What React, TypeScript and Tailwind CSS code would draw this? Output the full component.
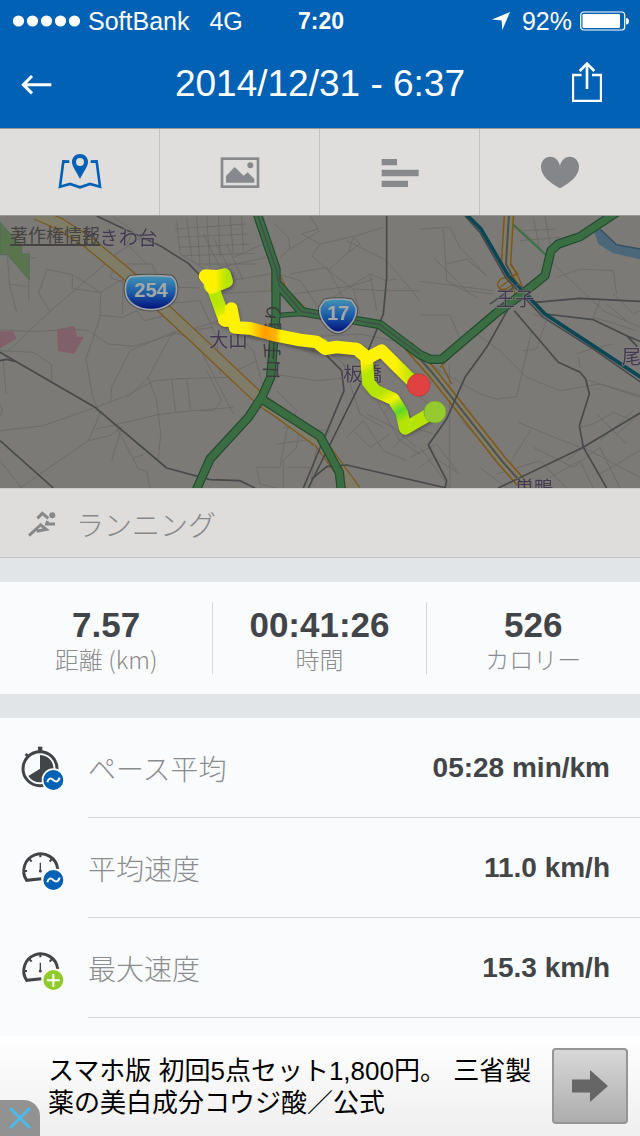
import type { ReactNode } from 'react';

const STREETS = [
  'M0 347L100 353L215 345L265 350L325 390L400 397L660 320',
  'M20 415L150 292L360 112L440 60',
  'M150 292L116 238L140 166L217 182L302 235L300 310L258 435L278 548L300 600L265 680L60 822',
  'M217 182L217 224L302 235L360 200L420 180',
  'M300 304L368 310L410 290L432 320L520 300',
  'M332 565L335 520L390 410L518 355L640 340',
  'M0 650L125 636L265 588L380 545L462 500L540 494L700 490',
  'M380 553L445 490L470 560L482 660L475 735',
  'M515 497L527 596M560 494L572 590M475 602L527 595L700 580',
  'M445 490L518 355L585 375L700 600',
  'M290 645L475 602M265 680L330 665L365 640L335 740',
  'M300 590L350 640L415 765L440 770L450 822M400 732L430 722',
  'M0 410L100 415L155 452L155 500M10 440L18 540',
  'M20 90L28 210L50 295M28 210L80 218M86 110L86 262M60 130L110 132',
  'M0 740L65 822M0 570L8 590L0 605',
  'M330 190L350 150L455 150L470 180L450 230M368 200L368 300M330 190L400 215L600 222',
  'M305 160L350 115M340 10L400 50L380 90L440 150',
  'M530 20L540 120L640 180M560 12L575 130M590 8L600 150M620 6L630 160M655 6L660 130M690 6L700 120M725 6L730 110',
  'M525 45L740 30M530 70L745 60M535 100L750 90M550 125L765 118M590 150L770 150',
  'M610 60L680 200M640 70L710 210M680 90L730 200M700 130L790 90M660 160L800 130M690 200L810 180M640 240L820 230',
  'M480 270L600 260L650 370L660 480M620 470L665 560L640 590L600 590',
  'M700 350L760 410L790 520M690 480L770 440M640 330L800 340',
  'M825 30L865 70L870 105L840 130M870 105L960 50M930 6L955 45L905 60L960 90L935 125L985 170',
  'M985 170L1000 155L1045 115L1060 70L1080 90L1045 115M960 90L1070 65L1150 40',
  'M985 170L1060 225L1160 230L1260 230M1000 250L1110 180L1160 200L1190 195',
  'M835 180L900 200L960 285M870 180L980 160L1030 250M880 240L1060 215L1120 195',
  'M1060 225L1080 300M1110 180L1130 290M1040 80L1160 140L1260 260',
  'M900 370L1080 360L1180 380M970 400L1030 450L1100 510M1030 450L1080 600L1150 640',
  'M820 480L950 500L1060 490M830 530L890 590L860 650L840 760L770 760L780 810L830 822',
  'M850 640L990 650L950 700L930 822M830 690L980 670M860 760L930 760M900 630L890 700L850 740L850 822',
  'M1040 670L1090 620L1150 710L1220 740M1060 650L1110 700L1170 660M1100 600L1180 640L1250 700',
  'M1130 560L1200 680L1260 720M1180 700L1240 640L1300 660M1150 600L1190 560L1260 640',
  'M1210 390L1320 470L1260 550L1340 610M1230 730L1310 690L1370 770',
  'M1260 45L1350 40L1380 100L1460 185M1300 130L1400 230L1480 240M1260 202L1480 230',
  'M1260 303L1350 303L1380 375L1410 380M1330 45L1340 200L1430 250M1340 150L1400 135L1460 185',
  'M1540 30L1600 80L1670 160L1810 290L1920 340M1570 50L1670 45M1560 80L1680 70M1600 10L1620 110M1635 6L1650 90',
  'M1670 190L1740 165L1840 170L1850 240M1600 300L1640 315L1610 405L1570 410M1730 420L1770 405L1840 390',
  'M1320 470L1440 540L1490 555L1550 548L1595 350M1430 360L1500 410L1580 490L1680 530L1800 510L1920 550',
  'M1555 625L1650 665L1740 700M1592 648L1525 755M1348 450L1350 822M1385 620L1470 710',
  'M1740 460L1735 430M1750 495L1920 545M1800 260L1780 310L1910 350M1820 270L1880 320M1840 240L1900 300L1920 290',
  'M1740 640L1780 630L1840 595L1900 620M1790 600L1850 660L1920 600M1800 680L1900 590M1830 640L1880 690',
  'M1490 780L1620 740L1700 822M1600 700L1720 760L1800 700L1860 822M1700 740L1750 700L1920 790',
  'M1260 700L1350 822M1260 760L1300 730L1380 780M1440 760L1520 822M1650 790L1740 740L1780 822M1800 780L1920 710',
];

const RAILS = [
  'M0 415L285 580L500 762L630 797L720 800L765 822',
  'M0 440L20 436L45 442',
  'M0 680L160 822',
  'M290 6L480 95L565 148L610 195',
  'M1160 6L1160 190L1150 300L1100 420',
  'M980 425L1025 470L1032 530L910 822',
  'M1090 490L1060 550L925 822',
  'M935 795L980 758L1040 753L1340 822',
  'M1605 265L1740 253L1920 262',
  'M1530 275L1460 400L1395 490L1340 615L1285 693L1340 800L1335 822',
  'M1543 290L1675 445L1740 475L1757 495L1768 540L1738 635L1750 700L1820 822',
  'M1920 597L1750 700L1495 822',
  'M1635 300L1780 317L1880 365L1920 382M1880 365L1912 398',
  'M1395 6L1440 55L1520 195L1630 310L1780 405L1920 503',
];

const GREENS = [
  'M828 305L900 299L960 303',
  'M785 555L960 667L1018 775L1024 830',
  'M772 0L828 165L828 300L812 490L785 550L745 610L630 735L588 830',
  'M828 205L905 293L960 303L1060 318L1140 332L1260 422L1290 436L1325 436L1490 296L1560 245L1635 185L1653 110L1675 90L1740 68L1850 -5',
];

function Label({ x, y, children }: { x: number; y: number; children: ReactNode }) {
  return (
    <text x={x} y={y} fontSize="58" fill="#3d344c" stroke="#858280" strokeWidth="4" paintOrder="stroke" opacity="0.9">
      {children}
    </text>
  );
}

function RouteMap() {
  return (
    <section className="relative">
      <svg
        viewBox="0 6 1920 816"
        preserveAspectRatio="xMidYMid slice"
        className="block h-[272px] w-full bg-[#7c7a76] font-['Noto_Sans_CJK_JP',sans-serif]"
        role="img"
        aria-label="ルート"
      >
        <defs>
          <linearGradient id="shield" x1="0" y1="0" x2="0" y2="1">
            <stop offset="0" stopColor="#4293b5" />
            <stop offset="0.5" stopColor="#1c5ca8" />
            <stop offset="1" stopColor="#03107a" />
          </linearGradient>
          <linearGradient id="upper" gradientUnits="userSpaceOnUse" x1="690" y1="0" x2="1240" y2="0">
            <stop offset="0" stopColor="#fff200" />
            <stop offset="0.1" stopColor="#ffee00" />
            <stop offset="0.19" stopColor="#ff9d00" />
            <stop offset="0.25" stopColor="#ffb400" />
            <stop offset="0.28" stopColor="#fff200" />
            <stop offset="0.9" stopColor="#fff200" />
            <stop offset="1" stopColor="#b4e400" />
          </linearGradient>
          <linearGradient id="lower" gradientUnits="userSpaceOnUse" x1="1100" y1="440" x2="1215" y2="640">
            <stop offset="0" stopColor="#fff200" />
            <stop offset="0.15" stopColor="#b4e400" />
            <stop offset="0.45" stopColor="#b4e400" />
            <stop offset="0.6" stopColor="#f5f200" />
            <stop offset="0.78" stopColor="#5cd826" />
            <stop offset="0.92" stopColor="#b4e400" />
          </linearGradient>
          <linearGradient id="start" gradientUnits="userSpaceOnUse" x1="630" y1="225" x2="680" y2="320">
            <stop offset="0" stopColor="#b4e400" />
            <stop offset="0.5" stopColor="#b9e600" />
            <stop offset="1" stopColor="#fff200" />
          </linearGradient>
          <linearGradient id="loop" gradientUnits="userSpaceOnUse" x1="620" y1="0" x2="680" y2="0">
            <stop offset="0.4" stopColor="#fff200" />
            <stop offset="1" stopColor="#b4e400" />
          </linearGradient>
          <filter id="shade" x="-10%" y="-10%" width="120%" height="120%">
            <feGaussianBlur stdDeviation="4" />
          </filter>
        </defs>

        <path d="M0 25L32 60L65 90V120H88V198L22 122H0Z" fill="#59754e" stroke="#466a5b" strokeWidth="2" />
        <path d="M0 353H38L48 373L0 402Z" fill="#80606a" stroke="#8d5668" strokeWidth="2" />
        <path d="M173 347L222 337L230 370H250L222 418L175 410Z" fill="#80606a" stroke="#8d5668" strokeWidth="2" />
        <path d="M1783 55L1800 45L1850 92L1930 107V138L1840 118L1795 90Z" fill="#4a6878" />
        <path d="M1800 45L1850 92L1930 107" fill="none" stroke="#374e60" strokeWidth="4" />

        <g fill="none" stroke="#6a6968" strokeWidth="2.5">
          {STREETS.map((d) => (
            <path key={d} d={d} />
          ))}
        </g>

        <g fill="none" strokeLinejoin="round">
          <path d="M110 0L180 30L265 85L380 180L600 385L785 560L830 590L960 685L1065 830" stroke="#7f5717" strokeWidth="38" />
          <path d="M110 0L180 30L265 85L380 180L600 385L785 560L830 590L960 685L1065 830" stroke="#7f7d68" strokeWidth="31" />
          <path d="M1527 0L1518 150L1545 200L1560 240M1225 395L1300 480L1505 740L1585 830" stroke="#7f5717" strokeWidth="32" />
          <path d="M1527 0L1518 150L1545 200L1560 240M1225 395L1300 480L1505 740L1585 830" stroke="#7f7d68" strokeWidth="23" />
          <path d="M1527 0L1518 150L1545 200M1225 395L1300 480L1505 740L1585 830" stroke="#4e4f50" strokeWidth="6" />
          <path d="M1518 225C1480 235 1490 185 1520 192L1553 180L1530 150M1500 220L1540 190L1550 205L1510 230" stroke="#7f5717" strokeWidth="4" />
          <path d="M815 150V230M838 180L860 225L920 287L1000 295M1320 460L1345 435L1490 310M1325 452L1355 510" stroke="#7f5717" strokeWidth="4" />
          <path d="M1540 32L1640 125" stroke="#39713f" strokeWidth="6" />
        </g>

        <g fill="none" stroke="#47494b" strokeWidth="5" strokeLinejoin="round">
          {RAILS.map((d) => (
            <path key={d} d={d} />
          ))}
        </g>
        <path d="M1398 0L1443 45L1525 185L1635 300L1780 395L1930 495" fill="none" stroke="#0b4655" strokeWidth="11" />

        <g fill="none" strokeLinejoin="round">
          {GREENS.map((d) => (
            <path key={d} d={d} stroke="#234b30" strokeWidth={d === GREENS[0] ? 16 : 28} />
          ))}
          {GREENS.map((d) => (
            <path key={d} d={d} stroke="#3b6d43" strokeWidth={d === GREENS[0] ? 10 : 21} />
          ))}
          <path d="M772 0L828 165L838 215L905 293L1060 318L1140 332L1260 422" stroke="#41504a" strokeWidth="5" />
          <path d="M1470 270L1555 210L1600 255" stroke="#4a5355" strokeWidth="5" />
        </g>

        <Label x={240} y={92}>ときわ台</Label>
        <Label x={627} y={400}>大山</Label>
        <Label x={1030} y={500}>板橋</Label>
        <Label x={1487} y={276}>王子</Label>
        <Label x={1865} y={451}>尾久</Label>
        <Label x={1544} y={842}>巣鴨</Label>
        <text transform="translate(834 496) rotate(-88)" fontSize="57" fill="#393c3b">
          山手通り
        </text>

        <g strokeLinecap="round" strokeLinejoin="round" fill="none" strokeWidth="38">
          <g stroke="#404040" opacity="0.6" transform="translate(3 5)" filter="url(#shade)">
            <path d="M616 185L680 182L680 205L638 222L674 320L694 325L694 284L705 340L820 362L975 402L1070 405L1103 432L1145 410L1240 505" />
            <path d="M1100 440L1105 505L1125 530L1180 555L1205 595L1216 643L1290 600" />
          </g>
          <path d="M968 393L970 396" stroke="#a8df08" />
          <path d="M630 215L640 225L674 318" stroke="url(#start)" />
          <path d="M616 185L650 187L674 182L680 202L635 220" stroke="url(#loop)" />
          <path d="M616 187L632 207" stroke="#fff200" />
          <path d="M1100 436L1105 505L1125 530L1180 555L1205 595L1216 643L1290 600" stroke="url(#lower)" />
          <path
            d="M674 319L692 320L694 284L705 340L750 343L820 362L900 378L950 384L975 404L1010 399L1070 405L1103 432L1145 410L1190 455L1240 505"
            stroke="url(#upper)"
          />
        </g>
        <circle cx="1256" cy="513" r="34" fill="#df4240" stroke="#b33a37" strokeWidth="2" />
        <circle cx="1305" cy="594" r="33" fill="#96cb30" stroke="#6f9a34" strokeWidth="2" />

        <g stroke="#303132" strokeWidth="11" opacity="0.6">
          <path d="M392 188Q453 182 514 188C528 196 532 220 529 235C520 304 386 304 377 235C374 220 378 196 392 188Z" />
          <path d="M974 259Q1014 251 1054 259L1068 280C1074 318 1035 355 1014 355C993 355 954 318 960 280Z" />
        </g>
        <g fill="url(#shield)" stroke="#9da2a7" strokeWidth="5">
          <path d="M392 188Q453 182 514 188C528 196 532 220 529 235C520 304 386 304 377 235C374 220 378 196 392 188Z" />
          <path d="M974 259Q1014 251 1054 259L1068 280C1074 318 1035 355 1014 355C993 355 954 318 960 280Z" />
        </g>
        <g
          className="font-['Liberation_Sans',sans-serif] font-bold"
          fontSize="60"
          fill="#a4a6a8"
          textAnchor="middle"
        >
          <text x="453" y="249">254</text>
          <text x="1014" y="317">17</text>
        </g>
      </svg>
      <a
        href="#copyright"
        className="absolute top-2 left-[10px] border-b-2 border-[#454441] font-['Noto_Sans_CJK_JP',sans-serif] text-[18px] leading-5 text-[#454441]"
      >
        著作権情報
      </a>
    </section>
  );
}

function StatusBar() {
  return (
    <div className="grid h-10 grid-cols-[1fr_auto_1fr] items-center pt-px pr-[10px] pl-3 text-[25px] leading-10">
      <div className="flex items-center">
        <svg viewBox="0 0 69 12" className="h-3 w-[69px]" fill="#fff" aria-hidden="true">
          {[6, 20, 34, 48, 62].map((cx) => (
            <circle key={cx} cx={cx + 0.5} cy="6" r="5.6" />
          ))}
        </svg>
        <span className="ml-[7px]">SoftBank</span>
        <span className="ml-5">4G</span>
      </div>
      <span className="text-[23px] font-bold">7:20</span>
      <div className="flex items-center justify-end">
        <svg viewBox="0 0 18 18" className="h-[18px] w-[18px]" fill="#fff" aria-hidden="true">
          <path d="M18 0L10.3 18L9.6 8.6L0 7.6Z" />
        </svg>
        <span className="ml-3">92%</span>
        <svg viewBox="0 0 50 20" className="ml-2 h-5 w-[50px]" aria-hidden="true">
          <rect x="0.7" y="1" width="44" height="18" rx="3" fill="none" stroke="#fff" strokeWidth="1.2" />
          <rect x="2.5" y="3" width="37.5" height="14" rx="1" fill="#fff" />
          <path d="M46 7C50 7 50 13.5 46 13.5Z" fill="#fff" />
        </svg>
      </div>
    </div>
  );
}

const TABS = [
  {
    label: '地図',
    color: 'text-[#0061b5]',
    icon: (
      <g>
        <path d="M208 99L190 98L180 174L210 166L240 176L270 166L300 174L290 98L272 99" fill="none" stroke="currentColor" strokeWidth="8" />
        <path fillRule="evenodd" d="M240 76C226 76 216 86 216 100C216 114 230 130 240 151C250 130 264 114 264 100C264 86 254 76 240 76ZM240 88a12 12 0 1 1 0 24a12 12 0 1 1 0-24Z" fill="currentColor" />
      </g>
    ),
  },
  {
    label: '写真',
    color: 'text-[#88898c]',
    icon: (
      <g>
        <rect x="186" y="90" width="108" height="84" fill="none" stroke="currentColor" strokeWidth="8" />
        <path d="M198 162V142L224 115L251 141L263 131L283 151V162Z" fill="currentColor" />
        <circle cx="271" cy="110" r="9" fill="currentColor" />
      </g>
    ),
  },
  {
    label: 'ラップ',
    color: 'text-[#88898c]',
    icon: <path d="M185 91H231V110H185ZM185 123H296V143H185ZM185 156H264V175H185Z" fill="currentColor" />,
  },
  {
    label: '心拍数',
    color: 'text-[#858689]',
    icon: (
      <path
        d="M240 111C235 92 224 84 211 84C194 84 183 97 183 115C183 145 219 168 240 179C261 168 297 145 297 115C297 97 286 84 269 84C256 84 245 92 240 111Z"
        fill="currentColor"
      />
    ),
  },
];

const STATS = [
  { value: '7.57', label: '距離 (km)' },
  { value: '00:41:26', label: '時間' },
  { value: '526', label: 'カロリー' },
];

function Badge({ kind }: { kind: 'average' | 'max' }) {
  return (
    <g fill="none" stroke="#fff">
      <circle cx="160" cy="213" r="32.5" fill={kind === 'average' ? '#0061b5' : '#8fcb2c'} stroke="#fafbfd" strokeWidth="5" />
      {kind === 'average' ? (
        <path d="M142 220C145 207 152 206 160 213S175 219 179 206" strokeWidth="6" />
      ) : (
        <path d="M160 195V233M141 214H179" strokeWidth="6" />
      )}
    </g>
  );
}

function Stopwatch() {
  return (
    <g>
      <rect x="114" y="113" width="13" height="14" fill="#424548" />
      <path d="M74 137L80 132L88 140L81 146Z" fill="#424548" />
      <circle cx="120" cy="179" r="51" fill="none" stroke="#424548" strokeWidth="9" />
      <path d="M120 179V138A41 41 0 1 1 85 201Z" fill="#424548" />
    </g>
  );
}

function Gauge() {
  return (
    <g fill="none" stroke="#424548">
      <path d="M124 209L80 214A51 51 0 1 1 173 180" strokeWidth="9" />
      <path d="M121 133V145M87 149L95 158M157 149L149 158M69 186H81M162 186H173" strokeWidth="6" />
      <path d="M121 161V185" strokeWidth="4" />
      <circle cx="121" cy="186" r="4.5" fill="#424548" stroke="none" />
    </g>
  );
}

const DETAILS = [
  { label: 'ペース平均', value: '05:28 min/km', icon: <Stopwatch />, badge: 'average' as const },
  { label: '平均速度', value: '11.0 km/h', icon: <Gauge />, badge: 'average' as const },
  { label: '最大速度', value: '15.3 km/h', icon: <Gauge />, badge: 'max' as const },
];

export default function App() {
  return (
    <div className="flex min-h-screen flex-col bg-[#e1e5e8] font-['Liberation_Sans','Noto_Sans_CJK_JP',sans-serif]">
      <header className="bg-[#0061b5] text-white">
        <StatusBar />
        <div className="grid h-[88px] grid-cols-[80px_1fr_80px] items-center">
          <button type="button" aria-label="戻る" className="flex h-full items-center pl-5">
            <svg viewBox="60 222 96 63" className="h-[21px] w-8" fill="none" stroke="#fff" strokeWidth="9">
              <path d="M154 254H70M96 228L70 254L96 280" />
            </svg>
          </button>
          <h1 className="text-center text-[37px] leading-10">2014/12/31 - 6:37</h1>
          <button type="button" aria-label="共有" className="flex h-full items-center justify-end pr-[38px]">
            <svg viewBox="756 186 90 120" className="h-10 w-[30px] -translate-y-0.5" fill="none" stroke="#fff" strokeWidth="7">
              <path d="M785 225H759V303H843V225H816" />
              <path d="M801 267V192M779 213L801 191L823 213" strokeWidth="8" />
            </svg>
          </button>
        </div>
      </header>

      <nav className="grid h-[88px] grid-cols-4 border-t border-b border-t-[#999794] border-b-[#999794] bg-[#dfdedc]">
        {TABS.map((tab) => (
          <button
            key={tab.label}
            type="button"
            aria-label={tab.label}
            className={`flex items-center justify-center border-r border-[#c3c2c0] last:border-r-0 ${tab.color}`}
          >
            <svg viewBox="174 70 132 120" className="h-10 w-11">
              {tab.icon}
            </svg>
          </button>
        ))}
      </nav>

      <RouteMap />

      <div className="flex h-[70px] items-center gap-5 border-t border-b border-t-[#d0cfcc] border-b-[#c5c5c3] bg-[#dedddb] pt-0.5 pl-7 text-[28px] leading-10 text-[#87888a]">
        <svg viewBox="84 76 84 84" className="h-7 w-7" fill="none" stroke="#87888a" strokeWidth="9" aria-hidden="true">
          <circle cx="157" cy="92" r="9" fill="#87888a" stroke="none" />
          <path d="M112 101L127 86L145 101M143 109L140 118H165" />
          <path d="M87 153L118 124M118 118L139 134L110 140" />
        </svg>
        <span className="font-['Noto_Sans_CJK_JP',sans-serif] font-light">ランニング</span>
      </div>

      <dl className="mt-6 grid h-28 grid-cols-3 bg-[#fafbfd] py-5">
        {STATS.map((stat) => (
          <div
            key={stat.label}
            className="flex flex-col-reverse justify-center border-r border-[#d5d6d9] pt-0.5 text-center last:border-r-0"
          >
            <dt className="font-['Noto_Sans_CJK_JP',sans-serif] text-[24px] leading-7 font-light text-[#8b8c8e]">
              {stat.label}
            </dt>
            <dd className="text-[35px] leading-10 font-bold text-[#424548]">{stat.value}</dd>
          </div>
        ))}
      </dl>

      <dl className="mt-6 flex-1 bg-[#fafbfd] pb-[18px]">
        {DETAILS.map((row) => (
          <div key={row.label} className="flex h-[100px] items-center gap-6 pl-5">
            <svg viewBox="60 108 132 138" className="h-[46px] w-11 shrink-0" aria-hidden="true">
              {row.icon}
              <Badge kind={row.badge} />
            </svg>
            <div className="flex h-full flex-1 items-center justify-between border-b border-[#d5d6d9] pr-[30px]">
              <dt className="font-['Noto_Sans_CJK_JP',sans-serif] text-[28px] leading-10 font-light text-[#8b8c8e]">
                {row.label}
              </dt>
              <dd className="text-[28px] leading-10 font-bold text-[#424548]">{row.value}</dd>
            </div>
          </div>
        ))}
      </dl>

      <aside className="relative flex h-[100px] items-center justify-between bg-linear-to-b from-white to-[#efefef] pr-3 pl-12">
        <p className="max-w-[490px] pt-0.5 text-[26px] leading-8 text-black">
          スマホ版 初回5点セット1,800円。 三省製薬の美白成分コウジ酸／公式
        </p>
        <button
          type="button"
          aria-label="広告を開く"
          className="flex h-[76px] w-[76px] shrink-0 items-center justify-center rounded-[4px] border-2 border-[#969696] bg-linear-to-b from-[#d8d8d8] to-[#adadad]"
        >
          <svg viewBox="0 0 36 32" className="h-8 w-9" fill="#666">
            <path d="M0 9.5H18V0L36 16L18 32V22.5H0Z" />
          </svg>
        </button>
        <button
          type="button"
          aria-label="閉じる"
          className="absolute bottom-0 left-0 flex h-9 w-10 items-center justify-center rounded-tr-[16px] bg-[#929292]"
        >
          <svg viewBox="0 0 22 22" className="h-[22px] w-[22px]" fill="none" stroke="#4bb9ea" strokeWidth="3">
            <path d="M1 1L21 21M21 1L1 21" />
          </svg>
        </button>
      </aside>
    </div>
  );
}
